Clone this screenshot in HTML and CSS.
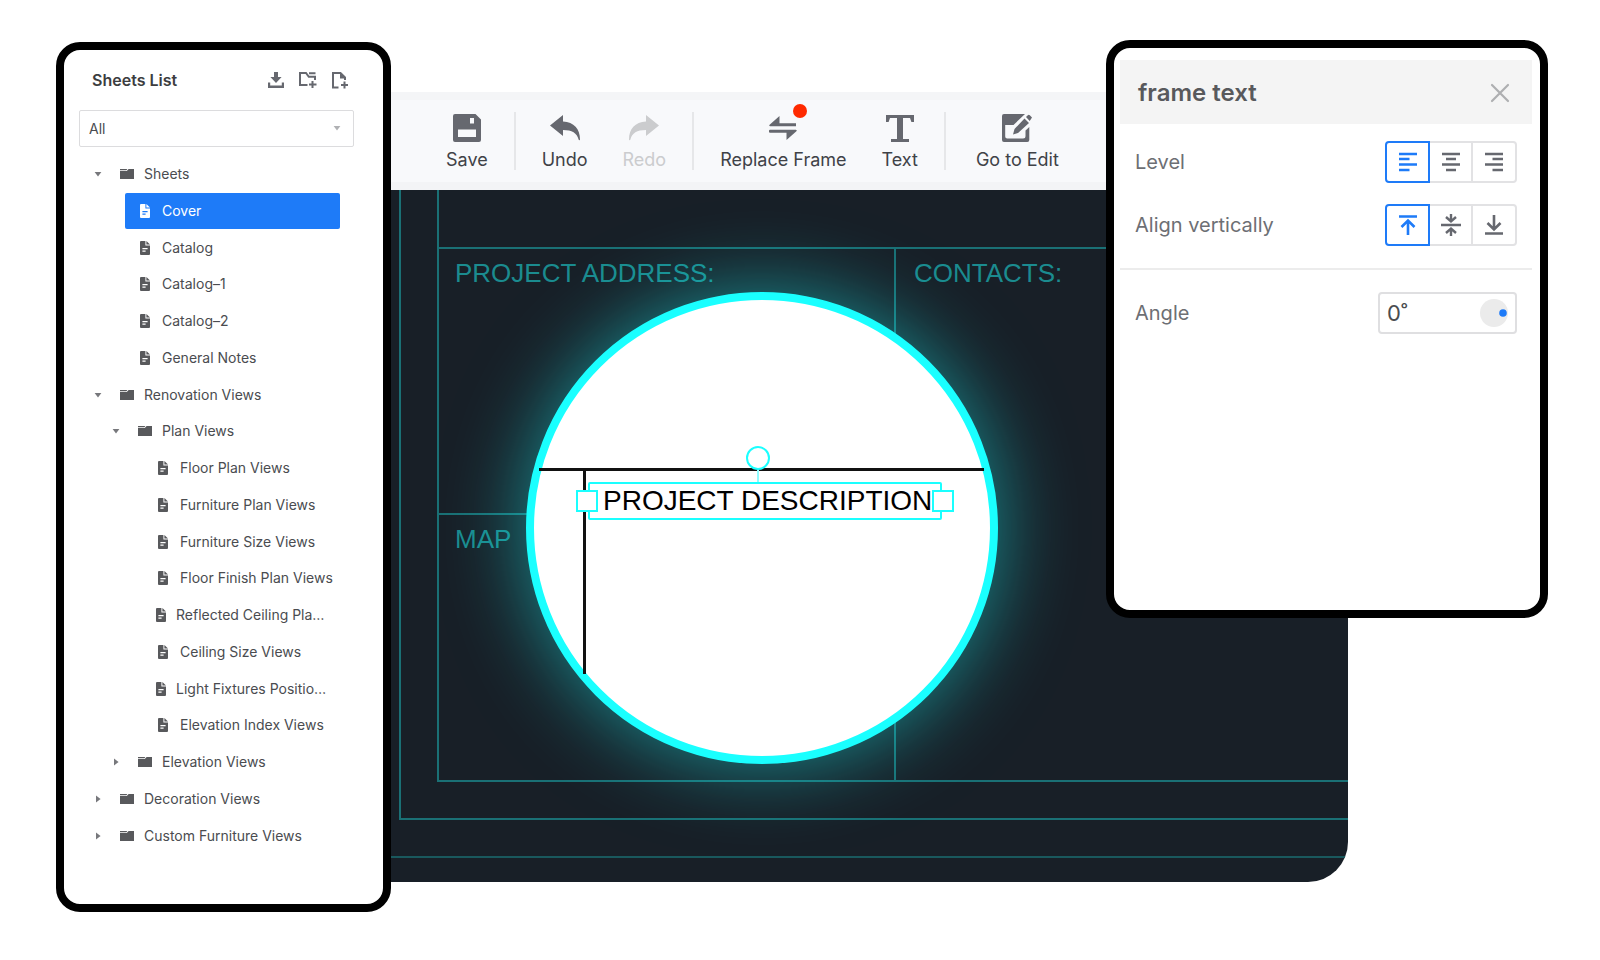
FILE: index.html
```html
<!DOCTYPE html>
<html lang="en">
<head>
<meta charset="utf-8">
<title>Sheet editor</title>
<link rel="stylesheet" href="styles.css">
</head>
<body>
<svg class="sprite" aria-hidden="true">
  <symbol id="i-file" viewBox="0 0 10 14"><path fill="currentColor" fill-rule="evenodd" d="M1 0h4.400v4.600H10V13a1 1 0 0 1-1 1H1a1 1 0 0 1-1-1V1a1 1 0 0 1 1-1zM2.400 7v1.200h5.200V7zM2.400 9.600v1.200h3.200V9.600z"/><path fill="currentColor" d="M6.400 0 10 3.600H6.400z"/></symbol>
  <symbol id="i-folder" viewBox="0 0 14 10"><path fill="currentColor" d="M0 0h7.400L6.400 1.200H0zM0 2h6.800l1.800-2H14v10H0z"/></symbol>
  <symbol id="i-down" viewBox="0 0 8 8"><path fill="currentColor" d="M.6 2h6.800L4 6.400z"/></symbol>
  <symbol id="i-right" viewBox="0 0 8 8"><path fill="currentColor" d="M2 .6v6.800L6.600 4z"/></symbol>
</svg>

<div class="stage">
  <main class="editor">
    <div class="toolbar" role="toolbar" aria-label="Sheet tools">
      <div class="group">
        <button class="tool" type="button"><svg width="28" height="28" viewBox="0 0 28 28"><path fill="currentColor" fill-rule="evenodd" d="M2 0h20.500L28 5.500V26a2 2 0 0 1-2 2H2a2 2 0 0 1-2-2V2a2 2 0 0 1 2-2zM17 4v5.500h4V4zM5 15.500V23h18v-7.500z"/></svg><span>Save</span></button>
      </div>
      <div class="group">
        <button class="tool" type="button"><svg width="30" height="28" viewBox="0 0 30 28"><path fill="currentColor" d="M0 11.500 13 1v6.500C24 8 30 15 30 25.500c0 1-1.200 1-1.400 0C27 19 22 16 13 16v6z"/></svg><span>Undo</span></button>
        <button class="tool" type="button" disabled><svg width="30" height="28" viewBox="0 0 30 28"><path fill="currentColor" d="M30 11.500 17 1v6.500C6 8 0 15 0 25.500c0 1 1.200 1 1.400 0C3 19 8 16 17 16v6z"/></svg><span>Redo</span></button>
      </div>
      <div class="group">
        <button class="tool" type="button"><svg width="28" height="28" viewBox="0 0 28 28"><path fill="currentColor" d="M10.500 2v7.200H27v3H1.200c-1 0-1.200-.8-.6-1.500zM17.500 26v-7.200H1q-1 0-1-1v-1q0-1 1-1h25.800c1 0 1.200.8.6 1.500z"/></svg><span>Replace Frame</span><i class="alert"></i></button>
        <button class="tool" type="button"><svg width="28" height="28" viewBox="0 0 28 28"><path fill="currentColor" d="M0 1h28v7h-2.600L24 4h-7v21h6v3H5v-3h6V4H4L2.600 8H0z"/></svg><span>Text</span></button>
      </div>
      <div class="group">
        <button class="tool" type="button"><svg width="30" height="28" viewBox="0 0 30 28"><path fill="currentColor" fill-rule="evenodd" d="M2 0h21L11.500 11H3.200v11.500a2 2 0 0 0 2 2H21a2.500 2.500 0 0 0 2.500-2.500v-5.500l3.800-3.600V26a2 2 0 0 1-2 2H2a2 2 0 0 1-2-2V2a2 2 0 0 1 2-2z"/><path fill="currentColor" d="M22.500 4.500 27 9 16 19l-5 1.500L12.500 15zM24 3l1.800-1.800q1-1 2 0L30 3.600 27.700 7z"/></svg><span>Go to Edit</span></button>
      </div>
    </div>

    <div class="canvas">
      <div class="rule v frame-left"></div>
      <div class="rule v block-left"></div>
      <div class="rule v block-middle"></div>
      <div class="rule h block-top"></div>
      <div class="rule h block-center"></div>
      <div class="rule h block-bottom"></div>
      <div class="rule h frame-bottom"></div>
      <div class="rule h page-bottom"></div>
      <span class="note address">PROJECT ADDRESS:</span>
      <span class="note contacts">CONTACTS:</span>
      <span class="note map">MAP</span>

      <div class="lens">
        <div class="ink ink-h"></div>
        <div class="ink ink-v"></div>
        <div class="selection">
          <span>PROJECT DESCRIPTION</span>
          <i class="stem"></i>
          <i class="rotate"></i>
          <i class="handle start"></i>
          <i class="handle end"></i>
        </div>
      </div>
    </div>
  </main>

  <aside class="panel sheets">
    <header class="sheets-head">
      <h2>Sheets List</h2>
      <div class="actions">
        <button type="button" aria-label="Download"><svg width="16" height="16" viewBox="0 0 16 16"><path fill="currentColor" d="M6 0h4v5h3.600L8 11 2.400 5H6zM0 10.500h2.200v3h11.600v-3H16V16H0z"/></svg></button>
        <button type="button" aria-label="New folder"><svg width="18" height="16" viewBox="0 0 18 16"><g fill="none" stroke="currentColor" stroke-width="2"><path d="M8.500 13H1V1h6l2.800 3.800H16V8M10 1.200h6.500M13.500 9v7M10 12.500h7.500"/></g></svg></button>
        <button type="button" aria-label="New sheet"><svg width="16" height="17" viewBox="0 0 16 17"><g fill="none" stroke="currentColor" stroke-width="2"><path d="M6.500 15.600H1V1h7.500L13 5.500V8"/><path d="M12.500 9.500v7M9 13h7"/></g><path fill="currentColor" d="M8 1l5.500 5.500H8z"/></svg></button>
      </div>
    </header>
    <div class="filter">
      <select aria-label="Filter sheets"><option>All</option></select>
      <svg class="filter-caret" width="8" height="8"><use href="#i-down"/></svg>
    </div>
    <ul class="tree">
      <li><svg class="caret"><use href="#i-down"/></svg><button type="button" class="node"><svg class="folder"><use href="#i-folder"/></svg><span>Sheets</span></button></li>
      <li class="l1"><button type="button" class="node selected"><svg class="file"><use href="#i-file"/></svg><span>Cover</span></button></li>
      <li class="l1"><button type="button" class="node"><svg class="file"><use href="#i-file"/></svg><span>Catalog</span></button></li>
      <li class="l1"><button type="button" class="node"><svg class="file"><use href="#i-file"/></svg><span>Catalog–1</span></button></li>
      <li class="l1"><button type="button" class="node"><svg class="file"><use href="#i-file"/></svg><span>Catalog–2</span></button></li>
      <li class="l1"><button type="button" class="node"><svg class="file"><use href="#i-file"/></svg><span>General Notes</span></button></li>
      <li><svg class="caret"><use href="#i-down"/></svg><button type="button" class="node"><svg class="folder"><use href="#i-folder"/></svg><span>Renovation Views</span></button></li>
      <li class="l1"><svg class="caret"><use href="#i-down"/></svg><button type="button" class="node"><svg class="folder"><use href="#i-folder"/></svg><span>Plan Views</span></button></li>
      <li class="l2"><button type="button" class="node"><svg class="file"><use href="#i-file"/></svg><span>Floor Plan Views</span></button></li>
      <li class="l2"><button type="button" class="node"><svg class="file"><use href="#i-file"/></svg><span>Furniture Plan Views</span></button></li>
      <li class="l2"><button type="button" class="node"><svg class="file"><use href="#i-file"/></svg><span>Furniture Size Views</span></button></li>
      <li class="l2"><button type="button" class="node"><svg class="file"><use href="#i-file"/></svg><span>Floor Finish Plan Views</span></button></li>
      <li class="l2"><button type="button" class="node clipped"><svg class="file"><use href="#i-file"/></svg><span>Reflected Ceiling Pla…</span></button></li>
      <li class="l2"><button type="button" class="node"><svg class="file"><use href="#i-file"/></svg><span>Ceiling Size Views</span></button></li>
      <li class="l2"><button type="button" class="node clipped"><svg class="file"><use href="#i-file"/></svg><span>Light Fixtures Positio…</span></button></li>
      <li class="l2"><button type="button" class="node"><svg class="file"><use href="#i-file"/></svg><span>Elevation Index Views</span></button></li>
      <li class="l1"><svg class="caret"><use href="#i-right"/></svg><button type="button" class="node"><svg class="folder"><use href="#i-folder"/></svg><span>Elevation Views</span></button></li>
      <li><svg class="caret"><use href="#i-right"/></svg><button type="button" class="node"><svg class="folder"><use href="#i-folder"/></svg><span>Decoration Views</span></button></li>
      <li><svg class="caret"><use href="#i-right"/></svg><button type="button" class="node"><svg class="folder"><use href="#i-folder"/></svg><span>Custom Furniture Views</span></button></li>
    </ul>
  </aside>

  <aside class="panel props">
    <header class="props-head">
      <h2>frame text</h2>
      <button type="button" aria-label="Close"><svg width="20" height="20" viewBox="0 0 20 20"><path d="M2 2l16 16M18 2L2 18" stroke="currentColor" stroke-width="2.200" stroke-linecap="round"/></svg></button>
    </header>
    <div class="rows">
      <div class="row">
        <span>Level</span>
        <div class="segments" role="group" aria-label="Level">
          <button type="button" class="on" aria-label="Left"><svg width="20" height="20" viewBox="0 0 20 20"><path d="M1 2h18M1 7h10.500M1 12.500h18M1 18h10.500" stroke="currentColor" stroke-width="2.600"/></svg></button>
          <button type="button" aria-label="Center"><svg width="20" height="20" viewBox="0 0 20 20"><path d="M1 2h18M5 7h10M1 12.500h18M5 18h10" stroke="currentColor" stroke-width="2.600"/></svg></button>
          <button type="button" aria-label="Right"><svg width="20" height="20" viewBox="0 0 20 20"><path d="M1 2h18M8.500 7H19M1 12.500h18M8.500 18H19" stroke="currentColor" stroke-width="2.600"/></svg></button>
        </div>
      </div>
      <div class="row">
        <span>Align vertically</span>
        <div class="segments" role="group" aria-label="Align vertically">
          <button type="button" class="on" aria-label="Top"><svg width="20" height="20" viewBox="0 0 20 20"><path d="M1 1.500h18M10 20V6M3.500 12 10 5.500l6.500 6.500" fill="none" stroke="currentColor" stroke-width="2.600"/></svg></button>
          <button type="button" aria-label="Middle"><svg width="20" height="22" viewBox="0 0 20 22"><path d="M0 11h20M10 0v6M5 3l5 4.500L15 3M10 22v-6M5 19l5-4.500 5 4.500" fill="none" stroke="currentColor" stroke-width="2.400"/></svg></button>
          <button type="button" aria-label="Bottom"><svg width="20" height="20" viewBox="0 0 20 20"><path d="M1 18.500h18M10 0v14M3.500 8l6.500 6.500L16.500 8" fill="none" stroke="currentColor" stroke-width="2.600"/></svg></button>
        </div>
      </div>
    </div>
    <div class="rows last">
      <div class="row">
        <label for="angle">Angle</label>
        <div class="angle">
          <input id="angle" type="text" value="0˚">
          <svg width="28" height="28" viewBox="0 0 28 28"><circle cx="14" cy="14" r="14" fill="#ebebeb"/><circle cx="23" cy="14" r="3.800" fill="#1e7bf8"/></svg>
        </div>
      </div>
    </div>
  </aside>
</div>
</body>
</html>
```

FILE: styles.css
```css
* { box-sizing: border-box; }

body {
  margin: 0;
  background: #fff;
  font-family: Inter, "Liberation Sans", sans-serif;
  color: #4a4c50;
}

button, input, select { font: inherit; color: inherit; }
button { padding: 0; border: 0; background: none; }
svg { display: block; flex: none; }
.sprite { position: absolute; width: 0; height: 0; }

.stage {
  display: grid;
  grid-template-columns: 335px minmax(0, 1fr) 442px;
  align-items: start;
  min-height: 100vh;
  padding: 40px 52px 48px 56px;
}

.panel {
  z-index: 1;
  grid-row: 1;
  border: 8px solid #000;
  border-radius: 24px;
  background: #fff;
}

/* Editor behind the panels */
.editor {
  z-index: 0;
  grid-row: 1;
  grid-column: 1 / -1;
  margin: 52px 200px 0 320px;
  border-bottom-right-radius: 40px;
  overflow: hidden;
}

.toolbar {
  display: flex;
  align-items: center;
  height: 98px;
  padding-left: 44px;
  border-top: 8px solid #f4f5f7;
  border-bottom: 8px solid #f3f4f6;
  background: #f8f9fb;
}

.group {
  display: flex;
  gap: 35px;
  height: 58px;
  padding: 0 26px;
  border-right: 2px solid #e6e7e9;
}
.group:last-child { padding: 0 30px; border-right: 0; }

.tool {
  position: relative;
  display: flex;
  flex-direction: column;
  align-items: center;
  gap: 6px;
  padding-top: 2px;
  font-size: 18px;
  line-height: 24px;
  color: #66686f;
  white-space: nowrap;
}
.tool span { color: #3f4247; }
.tool:disabled, .tool:disabled span { color: #cbccce; }

.alert {
  position: absolute;
  top: -8px;
  left: calc(50% + 10px);
  width: 14px;
  height: 14px;
  border-radius: 50%;
  background: #ff2a00;
}

.canvas {
  position: relative;
  height: 692px;
  background: #181f27;
  overflow: hidden;
}

.rule { position: absolute; background: #1a7075; }
.rule.v { width: 2px; }
.rule.h { height: 2px; right: 0; }
.frame-left { left: 23px; top: 0; height: 630px; }
.block-left { left: 61px; top: 0; height: 592px; }
.block-middle { left: 518px; top: 57px; height: 535px; }
.block-top { left: 61px; top: 57px; }
.rule.block-center { left: 61px; top: 323px; right: auto; width: 457px; }
.block-bottom { left: 61px; top: 590px; }
.frame-bottom { left: 23px; top: 628px; }
.page-bottom { left: 0; top: 666px; opacity: .7; }

.note {
  position: absolute;
  font: 26px/32px "Liberation Sans", Arial, sans-serif;
  color: #1b8b8f;
}
.address { left: 79px; top: 67px; }
.contacts { left: 538px; top: 67px; }
.map { left: 79px; top: 333px; }

.lens {
  position: absolute;
  left: 150px;
  top: 102px;
  width: 472px;
  height: 472px;
  border: 8px solid #1affff;
  border-radius: 50%;
  background: #fff;
  box-shadow: 0 0 80px rgba(26, 255, 255, .5);
}

.ink { position: absolute; background: #111; }
.ink-h { left: 5px; right: 6px; top: 168px; height: 3px; }
.ink-v { left: 49px; top: 168px; width: 3px; height: 206px; }

.selection {
  position: absolute;
  left: 54px;
  top: 182px;
  width: 354px;
  height: 38px;
  border: 2px solid #1affff;
  border-radius: 2px;
  padding-left: 13px;
  font: 28px/34px "Liberation Sans", Arial, sans-serif;
  color: #000;
  white-space: nowrap;
}
.selection i { position: absolute; border: 2px solid #1affff; background: #fff; }
.selection .handle { top: 6px; width: 22px; height: 22px; }
.selection .start { left: -14px; }
.selection .end { right: -14px; }
.selection .rotate { left: 156px; top: -38px; width: 24px; height: 24px; border-radius: 50%; }
.selection .stem { left: 167px; top: -14px; width: 2px; height: 12px; border: 0; background: #8ffcff; }

/* Sheets list */
.sheets {
  grid-column: 1;
  display: flex;
  flex-direction: column;
  height: calc(100vh - 90px);
  min-height: 870px;
  margin-top: 2px;
  padding: 13px 29px 50px 15px;
}

.sheets-head {
  display: flex;
  align-items: center;
  justify-content: space-between;
  height: 34px;
  padding: 0 6px 0 13px;
}
.sheets-head h2 { margin: 0; font-size: 16px; line-height: 24px; font-weight: 600; color: #3c3d40; }
.actions { display: flex; gap: 15px; color: #66686f; }

.filter { position: relative; margin: 13px 0 9px; }
.filter select {
  display: block;
  width: 100%;
  height: 37px;
  padding: 0 9px;
  border: 1px solid #dcdcde;
  border-radius: 2px;
  background: #fff;
  font-size: 14px;
  appearance: none;
}
.filter-caret { position: absolute; right: 13px; top: 14px; color: #b0b1b4; }

.tree {
  flex: 1;
  display: flex;
  flex-direction: column;
  justify-content: space-between;
  margin: 0;
  padding: 0 14px 0 10px;
  list-style: none;
}
.tree li { display: flex; align-items: center; }
.tree .l1 { padding-left: 18px; }
.tree .l2 { padding-left: 54px; }
.tree .l1 > .node:first-child { margin-left: 18px; }
.caret { width: 8px; height: 8px; margin: 0 5px; color: #77787c; }

.node {
  flex: 1;
  display: flex;
  align-items: center;
  height: 36px;
  padding-left: 8px;
  border-radius: 2px;
  font-size: 14px;
  line-height: 20px;
  white-space: nowrap;
}
.node svg { color: #58595c; }
.node .file { width: 10px; height: 14px; margin: 0 12px 0 7px; }
.node .folder { width: 14px; height: 10px; margin: 0 10px 0 5px; }
.node.clipped .file { margin: 0 10px 0 5px; }
.selected { background: #1e7bf8; color: #fff; }
.node.selected svg { color: #fff; }

/* Text properties */
.props {
  grid-column: 3;
  min-height: 578px;
  padding: 12px 8px 0 6px;
}
.props-head {
  display: flex;
  align-items: center;
  justify-content: space-between;
  height: 64px;
  padding: 2px 22px 0 18px;
  background: #f4f4f4;
}
.props-head h2 { margin: 0; font-size: 24px; line-height: 32px; font-weight: 600; color: #58595c; }
.props-head button { color: #aeafb1; }

.rows {
  display: flex;
  flex-direction: column;
  gap: 21px;
  padding: 17px 15px 22px;
  border-bottom: 2px solid #ececec;
}
.rows.last { padding-top: 22px; border-bottom: 0; }
.row {
  display: flex;
  align-items: center;
  justify-content: space-between;
  font-size: 20px;
  line-height: 28px;
  color: #6d6f74;
}

.segments { display: flex; }
.segments button {
  display: flex;
  align-items: center;
  justify-content: center;
  width: 43px;
  height: 42px;
  border: 2px solid #e2e2e4;
  border-left: 0;
  color: #66686f;
}
.segments button:last-child { width: 44px; border-radius: 0 4px 4px 0; }
.segments button.on {
  width: 45px;
  border: 2px solid #1e7bf8;
  border-radius: 4px 0 0 4px;
  color: #1e7bf8;
}

.angle {
  display: flex;
  align-items: center;
  width: 139px;
  height: 42px;
  padding: 0 7px;
  border: 2px solid #dfdfe1;
  border-radius: 4px;
}
.angle input {
  flex: 1;
  min-width: 0;
  padding: 0;
  border: 0;
  outline: 0;
  background: none;
  font-size: 22px;
  color: #4a4c50;
}
```
